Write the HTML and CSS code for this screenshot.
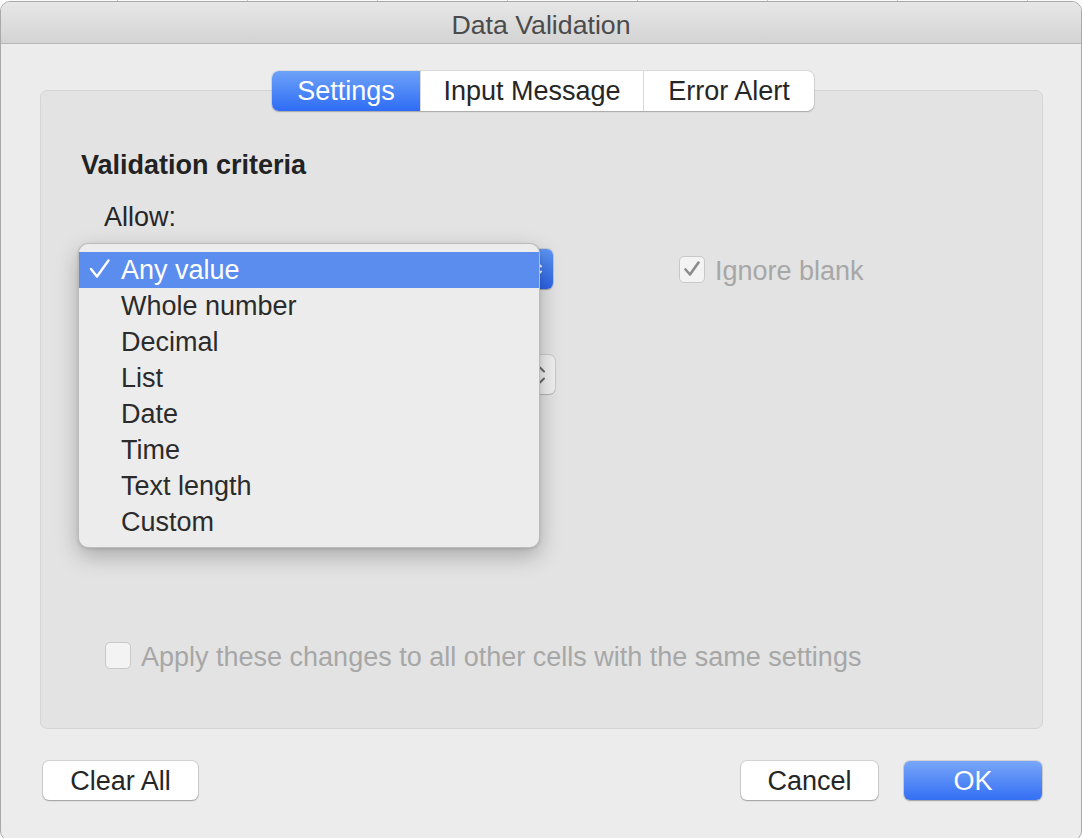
FILE: index.html
```html
<!DOCTYPE html>
<html lang="en">
<head>
<meta charset="utf-8">
<title>Data Validation</title>
<link rel="stylesheet" href="styles.css">
</head>
<body>
<div class="window">
  <div class="titlebar">Data Validation</div>
  <div class="content">
    <div class="tabs">
      <div class="tab tab-settings active">Settings</div>
      <div class="tab tab-input">Input Message</div>
      <div class="tab tab-error">Error Alert</div>
    </div>
    <div class="panel">
      <div class="section-title">Validation criteria</div>
      <div class="field-label">Allow:</div>
      <div class="row row-allow">
        <div class="popup popup-active">
          <div class="popup-cap">
            <svg class="chevrons" width="12" height="18" viewBox="0 0 12 18"><path d="M2 6.5 L6 2.5 L10 6.5 M2 11.5 L6 15.5 L10 11.5" fill="none" stroke="#ffffff" stroke-width="2" stroke-linecap="round" stroke-linejoin="round"/></svg>
          </div>
        </div>
        <div class="check check-ignore">
          <span class="box"><svg width="18" height="16" viewBox="0 0 18 16"><path d="M2.5 8.5 L7 13.5 L15.5 1.5" fill="none" stroke="#8b8b8b" stroke-width="2.6" stroke-linecap="round" stroke-linejoin="round"/></svg></span>
          <span class="check-text">Ignore blank</span>
        </div>
      </div>
      <div class="row row-data">
        <div class="popup popup-plain">
          <div class="popup-cap">
            <svg class="chevrons" width="12" height="22" viewBox="0 0 12 22"><path d="M2 7.5 L6 3.5 L10 7.5 M2 14.5 L6 18.5 L10 14.5" fill="none" stroke="#6a6a6a" stroke-width="2" stroke-linecap="round" stroke-linejoin="round"/></svg>
          </div>
        </div>
      </div>
      <div class="row row-apply">
        <div class="check check-apply">
          <span class="box"></span>
          <span class="check-text">Apply these changes to all other cells with the same settings</span>
        </div>
      </div>

      <div class="menu">
        <div class="menu-item selected">
          <svg class="menu-check" width="22" height="20" viewBox="0 0 22 20"><path d="M2 10 L8 17.5 L19.5 1.5" fill="none" stroke="#ffffff" stroke-width="2.4" stroke-linecap="round" stroke-linejoin="round"/></svg>
          Any value
        </div>
        <div class="menu-item">Whole number</div>
        <div class="menu-item">Decimal</div>
        <div class="menu-item">List</div>
        <div class="menu-item">Date</div>
        <div class="menu-item">Time</div>
        <div class="menu-item">Text length</div>
        <div class="menu-item">Custom</div>
      </div>
    </div>
    <div class="buttons">
      <button class="btn btn-clear">Clear All</button>
      <div class="spacer"></div>
      <button class="btn btn-cancel">Cancel</button>
      <button class="btn btn-ok">OK</button>
    </div>
  </div>
</div>
</body>
</html>
```

FILE: styles.css
```css
* { box-sizing: border-box; }

html, body {
  margin: 0;
  padding: 0;
}

body {
  width: 1082px;
  height: 838px;
  overflow: hidden;
  font-family: "Liberation Sans", Arial, sans-serif;
  font-size: 27px;
  color: #262626;
  background-color: #fbfbfb;
  background-image: repeating-linear-gradient(to right, transparent 0, transparent 116px, #c4c4c4 116px, #c4c4c4 117px, transparent 117px, transparent 130px);
  background-position: 1px 0;
}

.window {
  margin-top: 1px;
  width: 1082px;
  height: 840px;
  border: 1px solid #a9a9a9;
  border-radius: 10px;
  background: #ececec;
  overflow: hidden;
}

.titlebar {
  height: 42px;
  line-height: 46px;
  text-align: center;
  font-size: 26.7px;
  color: #4b4b4b;
  background: linear-gradient(#e7e7e7, #d3d3d3);
  border-bottom: 1px solid #b7b7b7;
  overflow: hidden;
}

.content {
  padding-top: 27px;
}

.tabs {
  position: relative;
  z-index: 1;
  display: flex;
  width: fit-content;
  margin-left: 271px;
  margin-bottom: -21px;
  height: 40px;
  border-radius: 7px;
  background: #ffffff;
  box-shadow: 0 0 0 1px rgba(0,0,0,0.07), 0 1px 1.5px rgba(0,0,0,0.22);
}

.tab {
  height: 40px;
  line-height: 41px;
  text-align: center;
  color: #262626;
  border-left: 1px solid #d9d9d9;
}

.tab-settings { width: 148px; border-left: none; border-radius: 7px 0 0 7px; }
.tab-input { width: 223px; }
.tab-error { width: 171px; }

.tab.active {
  color: #ffffff;
  background: linear-gradient(#6ea2f8, #2e6cf5);
}

.panel {
  position: relative;
  margin-left: 39px;
  width: 1003px;
  height: 639px;
  border: 1px solid #d5d5d5;
  border-radius: 7px;
  background: #e3e3e3;
  display: flex;
  flex-direction: column;
  padding: 0 40px 59px;
}

.section-title {
  margin-top: 58px;
  line-height: 32px;
  font-weight: bold;
  color: #222222;
}

.field-label {
  margin-top: 20px;
  margin-left: 23px;
  line-height: 32px;
  color: #262626;
}

.row {
  display: flex;
  align-items: center;
}

.row-allow {
  margin-top: 16px;
  height: 40px;
}

.row-data {
  margin-top: 66px;
  height: 39px;
}

.row-apply {
  margin-top: auto;
  height: 27px;
  padding-left: 24px;
}

.popup {
  position: relative;
  height: 100%;
  border-radius: 6px;
  display: flex;
  justify-content: flex-end;
}

.popup-active {
  width: 472px;
  background: #ffffff;
  box-shadow: 0 0 0 1px rgba(0,0,0,0.1), 0 1px 1px rgba(0,0,0,0.2);
}

.popup-active .popup-cap {
  width: 32px;
  height: 100%;
  border-radius: 0 6px 6px 0;
  background: linear-gradient(#5e95f5, #2c63e6);
  display: flex;
  align-items: center;
  justify-content: center;
}

.popup-plain {
  width: 474px;
  background: #efefef;
  box-shadow: 0 0 0 1px rgba(0,0,0,0.1), 0 1px 1px rgba(0,0,0,0.12);
}

.popup-plain .popup-cap {
  width: 30px;
  height: 100%;
  display: flex;
  align-items: center;
  justify-content: center;
}

.check {
  display: flex;
  align-items: center;
  color: #a7a7a7;
}

.check-ignore {
  margin-left: 126px;
}

.box {
  width: 26px;
  height: 27px;
  border: 1px solid #c8c8c8;
  border-radius: 5px;
  background: #f3f3f3;
  display: flex;
  align-items: center;
  justify-content: center;
  margin-right: 10px;
}

.check-text {
  line-height: 32px;
  padding-top: 3px;
}

.menu {
  position: absolute;
  left: 37px;
  top: 152px;
  width: 462px;
  padding: 8px 0 7px;
  border: 1px solid rgba(0,0,0,0.2);
  border-radius: 10px;
  background: #ececec;
  box-shadow: 0 8px 22px rgba(0,0,0,0.26), 0 1px 3px rgba(0,0,0,0.12);
  z-index: 2;
}

.menu-item {
  position: relative;
  height: 36px;
  line-height: 36px;
  padding-left: 42px;
  color: #2b2b2b;
}

.menu-item.selected {
  background: #5b8def;
  color: #ffffff;
}

.menu-check {
  position: absolute;
  left: 10px;
  top: 7px;
}

.buttons {
  display: flex;
  margin-top: 32px;
  padding: 0 39px 0 42px;
}

.spacer { flex: 1; }

.btn {
  height: 39px;
  padding: 2px 0 0;
  border: none;
  border-radius: 6px;
  background: #ffffff;
  font-family: "Liberation Sans", Arial, sans-serif;
  font-size: 27px;
  line-height: 37px;
  color: #262626;
  text-align: center;
  box-shadow: 0 0 0 1px rgba(0,0,0,0.1), 0 1px 1.5px rgba(0,0,0,0.25);
}

.btn-clear { width: 155px; }
.btn-cancel { width: 137px; margin-right: 26px; }
.btn-ok {
  width: 138px;
  color: #ffffff;
  background: linear-gradient(#78a6f8, #346ff5);
}
```
